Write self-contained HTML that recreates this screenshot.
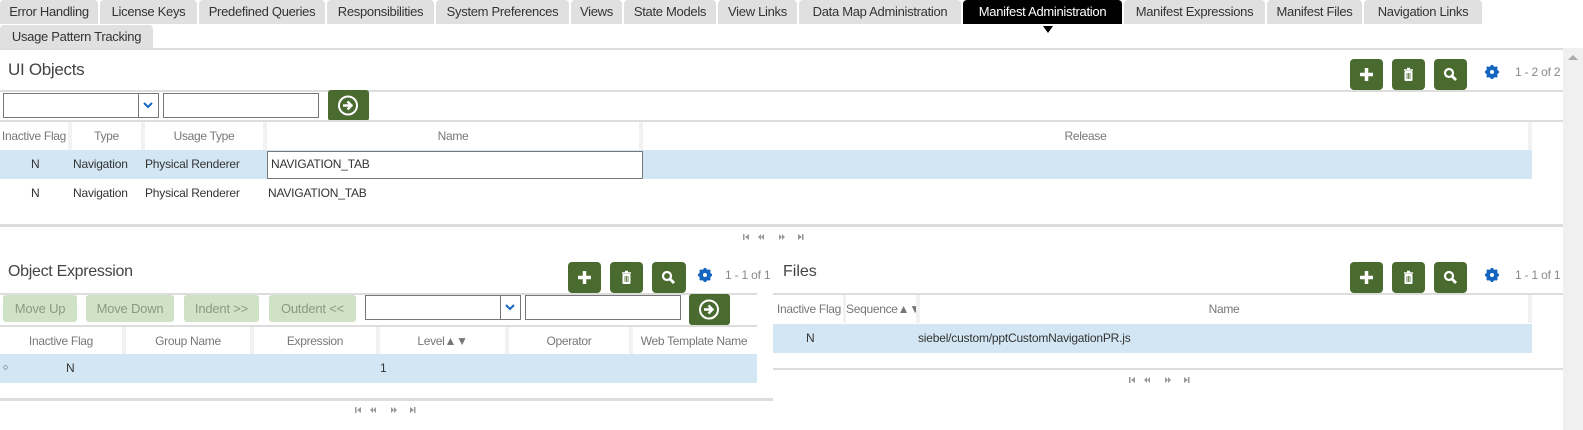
<!DOCTYPE html>
<html><head><meta charset="utf-8"><style>
*{margin:0;padding:0;box-sizing:border-box}
body{width:1583px;height:430px;position:relative;background:#fff;font-family:"Liberation Sans",sans-serif;color:#333;overflow:hidden}
.a{position:absolute}
.tab{position:absolute;height:24px;background:#e0e0e0;border-radius:4px 4px 0 0;font-size:13px;line-height:24px;color:#333;letter-spacing:-0.3px;white-space:nowrap;text-align:center}
.btn{position:absolute;width:33px;height:31px;background:#4a6b30;border-radius:4px}
.t{position:absolute;font-size:12px;white-space:nowrap;letter-spacing:-0.2px}
.h{position:absolute;font-size:12px;color:#777;text-align:center;white-space:nowrap;letter-spacing:-0.3px;background:#fff;height:29px;line-height:29px}
.sep{position:absolute;background:#f2f2f2;width:4px}
.line{position:absolute;background:#ddd;height:2px}
.inp{position:absolute;border:1px solid #777;background:#fff;height:25px}
.tb{position:absolute;height:27px;background:#cfe2c6;border-radius:3px;color:#8a9a82;font-size:13px;line-height:27px;text-align:center;letter-spacing:-0.2px}
.pg{position:absolute}
</style></head><body>
<svg width="0" height="0" style="position:absolute"><defs>
<g id="plus"><path d="M16.5 9v13M10 15.5h13" stroke="#fff" stroke-width="3.5"/></g>
<g id="trash"><path d="M12 11h9M15 9.5h3" stroke="#fff" stroke-width="1.6"/><rect x="12.5" y="12" width="8" height="10" rx="1" fill="#fff"/><path d="M15 14v6M16.5 14v6M18 14v6" stroke="#4a6b30" stroke-width="0.8"/></g>
<g id="srch"><circle cx="15" cy="14" r="4" fill="none" stroke="#fff" stroke-width="2.2"/><path d="M18 17l4 4" stroke="#fff" stroke-width="2.8"/></g>
<g id="gear"><circle cx="8" cy="8" r="4.5" fill="none" stroke="#1565c0" stroke-width="3"/><path d="M8 1v14M1 8h14M3 3l10 10M13 3L3 13" stroke="#1565c0" stroke-width="2.6"/><circle cx="8" cy="8" r="2" fill="#fff"/></g>
<g id="go"><circle cx="20" cy="15.5" r="9" fill="none" stroke="#fff" stroke-width="2"/><path d="M15 15.5h8M19.5 11.5l4 4-4 4" fill="none" stroke="#fff" stroke-width="2.4"/></g>
<g id="pgr" fill="#999"><rect x="0" y="0" width="1.5" height="6"/><path d="M6 0L2 3l4 3z"/><path d="M18 0l-3 3 3 3zM21 0l-3 3 3 3z"/><path d="M36 0l3 3-3 3zM39 0l3 3-3 3z"/><path d="M55 0l4 3-4 3z"/><rect x="59" y="0" width="1.5" height="6"/></g>
</defs></svg>
<div class="tab" style="left:0;top:0;width:98px">Error Handling</div>
<div class="tab" style="left:100px;top:0;width:97px">License Keys</div>
<div class="tab" style="left:199px;top:0;width:126px">Predefined Queries</div>
<div class="tab" style="left:327px;top:0;width:107px">Responsibilities</div>
<div class="tab" style="left:436px;top:0;width:133px">System Preferences</div>
<div class="tab" style="left:571px;top:0;width:51px">Views</div>
<div class="tab" style="left:624px;top:0;width:92px">State Models</div>
<div class="tab" style="left:718px;top:0;width:79px">View Links</div>
<div class="tab" style="left:799px;top:0;width:162px">Data Map Administration</div>
<div class="tab" style="left:963px;top:0;width:159px;background:#000;color:#fff">Manifest Administration</div>
<div class="a" style="left:1043px;top:26px;width:0;height:0;border-left:5px solid transparent;border-right:5px solid transparent;border-top:7px solid #000"></div>
<div class="tab" style="left:1124px;top:0;width:141px">Manifest Expressions</div>
<div class="tab" style="left:1267px;top:0;width:95px">Manifest Files</div>
<div class="tab" style="left:1364px;top:0;width:118px">Navigation Links</div>
<div class="tab" style="left:0;top:25px;width:153px">Usage Pattern Tracking</div>
<div class="line" style="left:0;top:48px;width:1563px"></div>
<div class="a" style="left:1563px;top:48px;width:20px;height:382px;background:#f0f0f0"></div>
<div class="a" style="left:1568px;top:55px;width:0;height:0;border-left:5px solid transparent;border-right:5px solid transparent;border-bottom:5px solid #aaa"></div>

<div class="a" style="left:8px;top:60px;font-size:17px;color:#444;letter-spacing:-0.3px">UI Objects</div>
<svg class="btn" style="left:1350px;top:59px"><use href="#plus"/></svg>
<svg class="btn" style="left:1392px;top:59px"><use href="#trash"/></svg>
<svg class="btn" style="left:1434px;top:59px"><use href="#srch"/></svg>
<svg class="a" style="left:1484px;top:64px" width="16" height="16"><use href="#gear"/></svg>
<div class="t" style="left:1515px;top:65px;color:#888;font-size:12px">1 - 2 of 2</div>
<div class="line" style="left:0;top:90px;width:1563px"></div>
<div class="inp" style="left:3px;top:93px;width:156px"></div>
<div class="a" style="left:138px;top:94px;width:1px;height:23px;background:#777"></div>
<svg class="a" style="left:143px;top:101px" width="10" height="8"><path d="M1 2l4 4 4-4" fill="none" stroke="#1565c0" stroke-width="2"/></svg>
<div class="inp" style="left:163px;top:93px;width:156px"></div>
<svg class="a" style="left:328px;top:90px;width:41px;height:31px;background:#4a6b30;border-radius:3px"><use href="#go"/></svg>
<div class="line" style="left:0;top:120px;width:1563px"></div>

<div class="h" style="left:0;top:122px;width:68px">Inactive Flag</div>
<div class="sep" style="left:68px;top:122px;height:28px"></div>
<div class="h" style="left:72px;top:122px;width:69px">Type</div>
<div class="sep" style="left:141px;top:122px;height:28px"></div>
<div class="h" style="left:145px;top:122px;width:118px">Usage Type</div>
<div class="sep" style="left:263px;top:122px;height:28px"></div>
<div class="h" style="left:267px;top:122px;width:372px">Name</div>
<div class="sep" style="left:639px;top:122px;height:28px"></div>
<div class="h" style="left:643px;top:122px;width:885px">Release</div>
<div class="sep" style="left:1528px;top:122px;height:28px"></div>
<div class="a" style="left:0;top:150px;width:1532px;height:29px;background:#d3e6f3"></div>
<div class="t" style="left:31px;top:157px">N</div><div class="t" style="left:73px;top:157px">Navigation</div><div class="t" style="left:145px;top:157px">Physical Renderer</div>
<div class="inp" style="left:267px;top:151px;width:376px;height:28px"></div>
<div class="t" style="left:271px;top:157px">NAVIGATION_TAB</div>
<div class="t" style="left:31px;top:186px">N</div><div class="t" style="left:73px;top:186px">Navigation</div><div class="t" style="left:145px;top:186px">Physical Renderer</div><div class="t" style="left:268px;top:186px">NAVIGATION_TAB</div>
<div class="a" style="left:0;top:224px;width:1563px;height:3px;background:#ddd"></div>
<svg class="pg" style="left:743px;top:234px" width="62" height="7"><use href="#pgr"/></svg>

<div class="a" style="left:8px;top:263px;font-size:16px;color:#444;letter-spacing:-0.3px">Object Expression</div>
<svg class="btn" style="left:568px;top:262px"><use href="#plus"/></svg>
<svg class="btn" style="left:610px;top:262px"><use href="#trash"/></svg>
<svg class="btn" style="left:652px;top:262px;width:34px"><use href="#srch"/></svg>
<svg class="a" style="left:697px;top:267px" width="16" height="16"><use href="#gear"/></svg>
<div class="t" style="left:725px;top:268px;color:#888">1 - 1 of 1</div>
<div class="a" style="left:783px;top:263px;font-size:16px;color:#444">Files</div>
<svg class="btn" style="left:1350px;top:262px"><use href="#plus"/></svg>
<svg class="btn" style="left:1392px;top:262px"><use href="#trash"/></svg>
<svg class="btn" style="left:1434px;top:262px"><use href="#srch"/></svg>
<svg class="a" style="left:1484px;top:267px" width="16" height="16"><use href="#gear"/></svg>
<div class="t" style="left:1515px;top:268px;color:#888">1 - 1 of 1</div>
<div class="line" style="left:0;top:293px;width:757px"></div>
<div class="line" style="left:773px;top:293px;width:790px"></div>

<div class="tb" style="left:3px;top:295px;width:74px">Move Up</div>
<div class="tb" style="left:86px;top:295px;width:88px">Move Down</div>
<div class="tb" style="left:184px;top:295px;width:75px">Indent &gt;&gt;</div>
<div class="tb" style="left:269px;top:295px;width:87px">Outdent &lt;&lt;</div>
<div class="inp" style="left:365px;top:295px;width:156px"></div>
<div class="a" style="left:500px;top:296px;width:1px;height:23px;background:#777"></div>
<svg class="a" style="left:505px;top:303px" width="10" height="8"><path d="M1 2l4 4 4-4" fill="none" stroke="#1565c0" stroke-width="2"/></svg>
<div class="inp" style="left:525px;top:295px;width:156px"></div>
<svg class="a" style="left:689px;top:294px;width:41px;height:31px;background:#4a6b30;border-radius:3px"><use href="#go"/></svg>
<div class="line" style="left:0;top:325px;width:757px"></div>
<div class="h" style="left:0;top:327px;width:122px">Inactive Flag</div>
<div class="sep" style="left:122px;top:327px;height:27px"></div>
<div class="h" style="left:126px;top:327px;width:124px">Group Name</div>
<div class="sep" style="left:250px;top:327px;height:27px"></div>
<div class="h" style="left:254px;top:327px;width:122px">Expression</div>
<div class="sep" style="left:376px;top:327px;height:27px"></div>
<div class="h" style="left:380px;top:327px;width:125px">Level▲▼</div>
<div class="sep" style="left:505px;top:327px;height:27px"></div>
<div class="h" style="left:509px;top:327px;width:120px">Operator</div>
<div class="sep" style="left:629px;top:327px;height:27px"></div>
<div class="h" style="left:633px;top:327px;width:122px">Web Template Name</div>
<div class="a" style="left:0;top:354px;width:757px;height:29px;background:#d3e6f3"></div>
<div class="t" style="left:3px;top:362px;font-size:9px">○</div>
<div class="t" style="left:66px;top:361px">N</div>
<div class="t" style="left:380px;top:361px">1</div>
<div class="a" style="left:0;top:398px;width:773px;height:3px;background:#ddd"></div>
<svg class="pg" style="left:355px;top:407px" width="62" height="7"><use href="#pgr"/></svg>

<div class="h" style="left:775px;top:295px;width:68px">Inactive Flag</div>
<div class="sep" style="left:843px;top:295px;height:28px"></div>
<div class="h" style="left:846px;top:295px;width:70px">Sequence▲▼</div>
<div class="sep" style="left:916px;top:295px;height:28px"></div>
<div class="h" style="left:920px;top:295px;width:608px">Name</div>
<div class="sep" style="left:1528px;top:295px;height:28px"></div>
<div class="a" style="left:773px;top:324px;width:759px;height:29px;background:#d3e6f3"></div>
<div class="t" style="left:806px;top:331px">N</div>
<div class="t" style="left:918px;top:331px">siebel/custom/pptCustomNavigationPR.js</div>
<div class="a" style="left:773px;top:368px;width:790px;height:2px;background:#ddd"></div>
<svg class="pg" style="left:1129px;top:377px" width="62" height="7"><use href="#pgr"/></svg>
</body></html>
